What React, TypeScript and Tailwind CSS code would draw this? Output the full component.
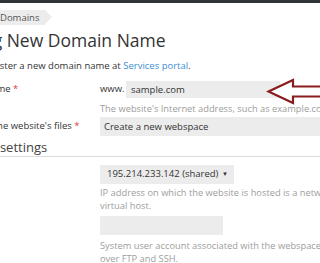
const Req = () => <span className="text-[#e0393e]"> *</span>;

const Help = ({ children }: { children: React.ReactNode }) => (
  <p className="text-[9.3px] leading-[13px] text-[#9d9d9d] whitespace-nowrap">{children}</p>
);

export default function App() {
  return (
    <div
      className="w-[320px] h-[263px] overflow-hidden bg-white text-[#333]"
      style={{ fontFamily: '"Open Sans", "Noto Sans", sans-serif' }}
    >
      <div className="h-[3px] bg-[#2f3439]" />

      {/* breadcrumb */}
      <div className="mt-[7px] flex">
        <div className="relative h-[15px] -ml-[10px] pl-[10px] pr-[6px] bg-[#ececec] text-[9.5px] leading-[15px] text-[#555]">
          Domains
          <span className="absolute -right-[7px] top-0 w-0 h-0 border-y-[7.5px] border-y-transparent border-l-[7px] border-l-[#ececec]" />
        </div>
      </div>

      <h1 className="mt-[3px] -ml-[55px] text-[17.5px] leading-[24px] whitespace-nowrap text-[#333]">
        Adding New Domain Name
      </h1>

      <p className="mt-[7px] -ml-[19px] text-[9.5px] leading-[14px] whitespace-nowrap">
        Register a new domain name at <span className="text-[#3d8fd6]">Services portal</span>.
      </p>

      {/* domain name row */}
      <div className="relative mt-[8px] flex items-center h-[17px]">
        <div className="w-[100px] shrink-0 overflow-hidden">
          <div className="-ml-[52px] text-[9.5px] whitespace-nowrap">
            Domain name<Req />
          </div>
        </div>
        <span className="text-[9.5px] w-[26px]">www.</span>
        <div className="w-[154px] h-[17px] bg-[#ececec] pl-[5px] text-[9.5px] leading-[17px]">
          sample.com
        </div>
        <svg
          className="absolute left-[266px] -top-[3px]"
          width="56"
          height="27"
          viewBox="0 0 56 27"
        >
          <path
            d="M2.5 13.5 L27 2 L27 8.5 L58 8.5 L58 18.5 L27 18.5 L27 25 Z"
            fill="white"
            stroke="#8b1c1c"
            strokeWidth="2.2"
            strokeLinejoin="miter"
          />
        </svg>
      </div>
      <div className="ml-[100px] mt-[4px]">
        <Help>The website's Internet address, such as example.com</Help>
      </div>

      {/* location row */}
      <div className="mt-[2px] flex items-center h-[19px]">
        <div className="w-[100px] shrink-0 overflow-hidden">
          <div className="-ml-[58px] text-[9.5px] whitespace-nowrap">
            Location of the website's files<Req />
          </div>
        </div>
        <div className="flex-1 h-[19px] bg-[#ececec] pl-[4px] text-[9.5px] leading-[19px] whitespace-nowrap">
          Create a new webspace
        </div>
      </div>

      {/* hosting settings */}
      <div className="mt-[2px] border-b border-[#dcdcdc] h-[19px]">
        <h2 className="-ml-[50px] text-[13px] leading-[19px] whitespace-nowrap text-[#444]">
          Hosting settings
        </h2>
      </div>

      <div className="ml-[100px] mt-[8px]">
        <div className="w-[134px] h-[19px] bg-[#ececec] pl-[7px] pr-[6px] flex items-center justify-between text-[9.5px] whitespace-nowrap">
          <span>195.214.233.142 (shared)</span>
          <span className="text-[6px]">▼</span>
        </div>
        <div className="mt-[2px]">
          <Help>
            IP address on which the website is hosted is a network interface with the
            <br />
            virtual host.
          </Help>
        </div>
        <div className="mt-[4px] w-[123px] h-[19px] bg-[#ececec]" />
        <div className="mt-[4px]">
          <Help>
            System user account associated with the webspace, used to access files
            <br />
            over FTP and SSH.
          </Help>
        </div>
      </div>
    </div>
  );
}
